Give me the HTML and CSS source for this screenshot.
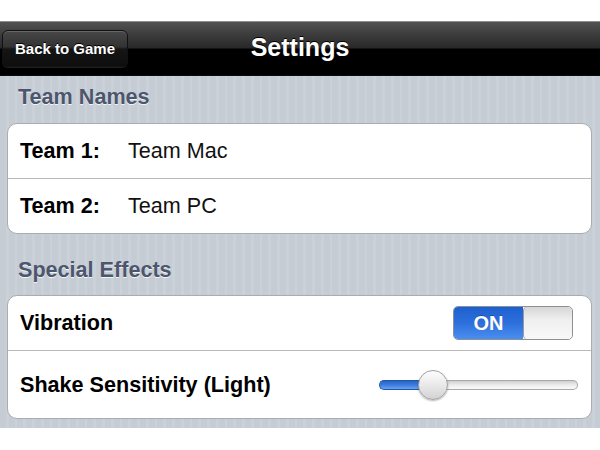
FILE: index.html
```html
<!DOCTYPE html>
<html>
<head>
<meta charset="utf-8">
<link rel="stylesheet" href="styles.css">
</head>
<body>
<div class="top-gap"></div>
<div class="navbar">
  <button class="back-btn">Back to Game</button>
  <div class="title">Settings</div>
</div>
<div class="content">
  <div class="section">
    <div class="section-header">Team Names</div>
    <div class="group">
      <div class="row">
        <span class="label label-fixed">Team 1:</span>
        <span class="value">Team Mac</span>
      </div>
      <div class="row">
        <span class="label label-fixed">Team 2:</span>
        <span class="value">Team PC</span>
      </div>
    </div>
  </div>
  <div class="section section-second">
    <div class="section-header">Special Effects</div>
    <div class="group">
      <div class="row row-between">
        <span class="label">Vibration</span>
        <div class="toggle">
          <div class="toggle-on">ON</div>
          <div class="toggle-knob"></div>
        </div>
      </div>
      <div class="row row-between row-tall">
        <span class="label">Shake Sensitivity (Light)</span>
        <div class="slider">
          <div class="slider-fill"></div>
          <div class="slider-rest"></div>
          <div class="slider-thumb"></div>
        </div>
      </div>
    </div>
  </div>
</div>
</body>
</html>
```

FILE: styles.css
```css
* { box-sizing: border-box; }
html, body {
  margin: 0;
  padding: 0;
  background: #fff;
  width: 600px;
  height: 450px;
  overflow: hidden;
  font-family: "Liberation Sans", Arial, sans-serif;
}
.top-gap { height: 21px; }
.navbar {
  position: relative;
  height: 55px;
  display: flex;
  align-items: center;
  justify-content: center;
  border-top: 1px solid #8e8e8e;
  background: linear-gradient(#525252 0, #3d3d3d 12px, #282828 26px, #000 27px, #000 53px, #1a1a1a 54px);
}
.back-btn {
  position: absolute;
  left: 2px;
  top: 8px;
  width: 126px;
  height: 37px;
  border: 1px solid #111;
  border-radius: 6px;
  background: linear-gradient(#474747 0, #333 45%, #151515 52%, #0e0e0e 100%);
  box-shadow: inset 0 1px 0 rgba(255,255,255,0.18), 0 1px 0 rgba(255,255,255,0.12);
  color: #fff;
  font-family: "Liberation Sans", Arial, sans-serif;
  font-weight: bold;
  font-size: 15px;
  padding: 0 0 1px 0;
  text-shadow: 0 -1px 0 #000;
}
.title {
  color: #fff;
  font-weight: bold;
  font-size: 25px;
  text-shadow: 0 -1px 0 #000;
  margin-top: -3px;
}
.content {
  height: 352px;
  background-color: #c6cdd5;
  background-image: repeating-linear-gradient(90deg, #c5ccd4 0, #c5ccd4 6px, #cad1d8 6px, #cad1d8 8.75px);
}
.section-header {
  padding: 8px 18px 14px 18px;
  font-size: 21.6px;
  line-height: 25px;
  font-weight: bold;
  color: #4c566c;
  text-shadow: 0 1px 0 rgba(255,255,255,0.8);
}
.section-second { margin-top: 15px; }
.section-second .section-header { padding-bottom: 13px; }
.group {
  margin: 0 8px 0 7px;
  background: #fff;
  border: 1px solid #a9adb2;
  border-radius: 10px;
  overflow: hidden;
}
.row {
  height: 55px;
  display: flex;
  align-items: center;
  padding-left: 12px;
  border-top: 1px solid #b9b9b9;
}
.row:first-child { border-top: none; height: 54px; }
.row-tall { height: 68px; }
.row-between { justify-content: space-between; }
.label {
  font-size: 21.6px;
  font-weight: bold;
  color: #000;
}
.label-fixed { width: 108px; }
.value {
  font-size: 21.6px;
  color: #111;
}
.toggle {
  display: flex;
  width: 120px;
  height: 34px;
  margin-right: 18px;
  border: 1px solid #8d8f94;
  border-radius: 5px;
  overflow: hidden;
}
.toggle-on {
  width: 69px;
  display: flex;
  align-items: center;
  justify-content: center;
  background: linear-gradient(#1d5fcf 0, #2d70dc 50%, #4b8ef0 100%);
  color: #fff;
  font-weight: bold;
  font-size: 20px;
  text-shadow: 0 -1px 0 rgba(0,0,0,0.25);
}
.toggle-knob {
  flex: 1;
  border-left: 1px solid #9a9a9a;
  border-radius: 4px;
  background: linear-gradient(#d6d6d6 0, #efefef 40%, #f8f8f8 100%);
}
.slider {
  position: relative;
  width: 199px;
  height: 30px;
  margin-right: 13px;
  display: flex;
  align-items: center;
}
.slider-fill {
  width: 56px;
  height: 10px;
  border-radius: 5px 0 0 5px;
  border: 1px solid #2456a8;
  border-right: none;
  background: linear-gradient(#2a63c4 0, #3b7ee0 50%, #6aa2ef 100%);
}
.slider-rest {
  flex: 1;
  height: 10px;
  border-radius: 0 5px 5px 0;
  border: 1px solid #a8a8a8;
  border-left: none;
  background: linear-gradient(#cfcfcf 0, #ececec 50%, #fafafa 100%);
}
.slider-thumb {
  position: absolute;
  left: 39px;
  top: 0;
  width: 30px;
  height: 30px;
  border-radius: 50%;
  border: 1px solid #a3a3a3;
  background: linear-gradient(#fdfdfd 0, #e9e9e9 50%, #d2d2d2 100%);
  box-shadow: 0 1px 2px rgba(0,0,0,0.3);
}
```
